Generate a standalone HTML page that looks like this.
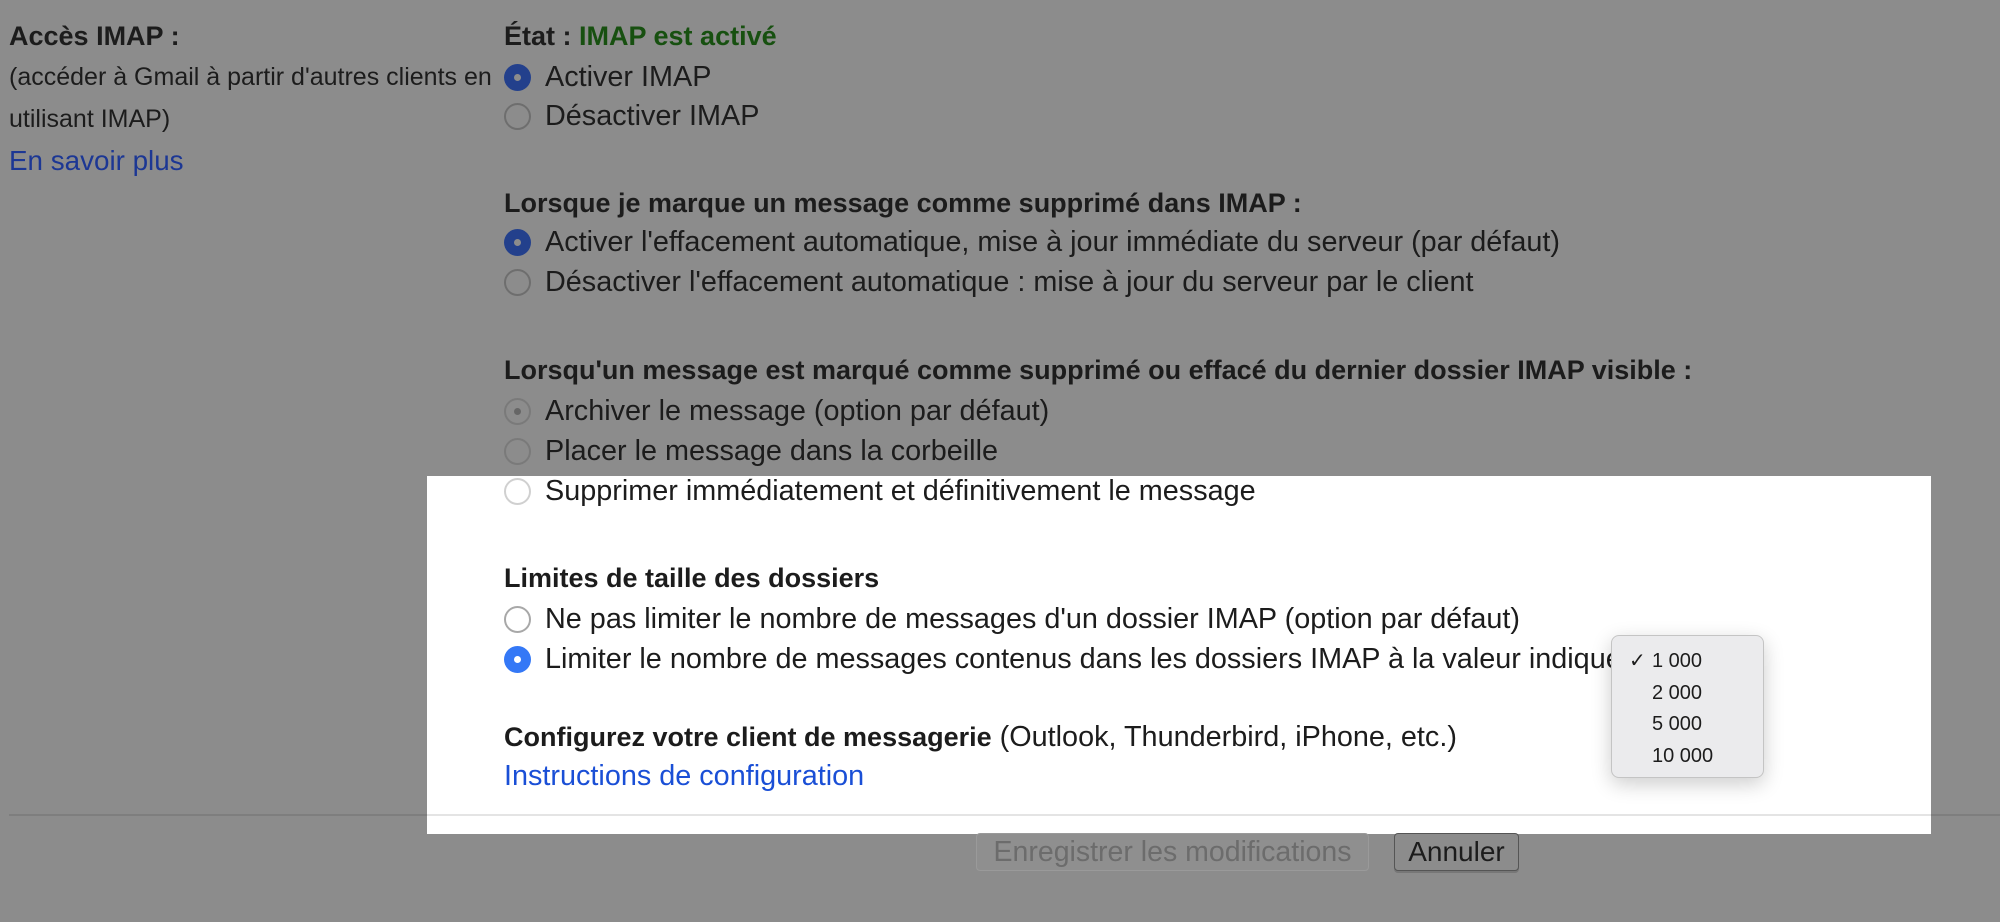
<!DOCTYPE html>
<html><head><meta charset="utf-8"><style>
html,body{margin:0;padding:0}
body{width:2000px;height:922px;background:#8c8c8c;position:relative;overflow:hidden;font-family:"Liberation Sans",Arial,sans-serif;font-size:28.8px;color:#1c1c1c}
.t{position:absolute;line-height:40px;white-space:nowrap}
b{font-weight:bold;font-size:27px}
.r{position:absolute;width:23px;height:23px;border-radius:50%;border:2px solid #6e6e6e;box-sizing:content-box}
.panel{position:absolute;left:427px;top:476px;width:1504px;height:358px;background:#fff}
</style></head><body>
<div class="t" style="left:9px;top:16px"><b>Accès IMAP :</b></div>
<div class="t" style="left:9px;top:57px;font-size:25px">(accéder à Gmail à partir d'autres clients en</div>
<div class="t" style="left:9px;top:99px;font-size:25px">utilisant IMAP)</div>
<div class="t" style="left:9px;top:141px;color:#1c3794;font-size:27.8px">En savoir plus</div>

<div class="t" style="left:504px;top:16px"><b>État : <span style="color:#175010">IMAP est activé</span></b></div>
<div class="r" style="left:504px;top:64px;border:none;width:27px;height:27px;background:#23408c"><div style="position:absolute;left:10px;top:10px;width:7px;height:7px;border-radius:50%;background:#8c8c8c"></div></div>
<div class="t" style="left:545px;top:57px">Activer IMAP</div>
<div class="r" style="left:504px;top:103px"></div>
<div class="t" style="left:545px;top:96px">Désactiver IMAP</div>

<div class="t" style="left:504px;top:183px"><b>Lorsque je marque un message comme supprimé dans IMAP :</b></div>
<div class="r" style="left:504px;top:229px;border:none;width:27px;height:27px;background:#23408c"><div style="position:absolute;left:10px;top:10px;width:7px;height:7px;border-radius:50%;background:#8c8c8c"></div></div>
<div class="t" style="left:545px;top:222px">Activer l'effacement automatique, mise à jour immédiate du serveur (par défaut)</div>
<div class="r" style="left:504px;top:269px"></div>
<div class="t" style="left:545px;top:262px">Désactiver l'effacement automatique : mise à jour du serveur par le client</div>

<div class="t" style="left:504px;top:350px"><b>Lorsqu'un message est marqué comme supprimé ou effacé du dernier dossier IMAP visible :</b></div>
<div class="r" style="left:504px;top:398px;border-color:#7a7a7a"><div style="position:absolute;left:8px;top:8px;width:7px;height:7px;border-radius:50%;background:#666"></div></div>
<div class="t" style="left:545px;top:391px">Archiver le message (option par défaut)</div>
<div class="r" style="left:504px;top:438px;border-color:#7a7a7a"></div>
<div class="t" style="left:545px;top:431px">Placer le message dans la corbeille</div>

<div style="position:absolute;left:9px;top:814px;width:1991px;height:2px;background:#7e7e7e"></div>

<div class="panel"></div>
<div style="position:absolute;left:427px;top:814px;width:1504px;height:2px;background:#e4e4e4"></div>
<div class="r" style="left:504px;top:478px;border-color:#d0d0d0"></div>
<div class="t" style="left:545px;top:471px">Supprimer immédiatement et définitivement le message</div>
<div class="t" style="left:504px;top:558px"><b>Limites de taille des dossiers</b></div>
<div class="r" style="left:504px;top:606px;border-color:#a8a8a8"></div>
<div class="t" style="left:545px;top:599px">Ne pas limiter le nombre de messages d'un dossier IMAP (option par défaut)</div>
<div class="r" style="left:504px;top:646px;border:none;width:27px;height:27px;background:#3478f6"><div style="position:absolute;left:10px;top:10px;width:7px;height:7px;border-radius:50%;background:#fff"></div></div>
<div class="t" style="left:545px;top:639px">Limiter le nombre de messages contenus dans les dossiers IMAP à la valeur indiquée</div>
<div class="t" style="left:504px;top:717px"><b>Configurez votre client de messagerie</b> (Outlook, Thunderbird, iPhone, etc.)</div>
<div class="t" style="left:504px;top:756px;color:#1a4fd6">Instructions de configuration</div>

<div style="position:absolute;left:1611px;top:635px;width:153px;height:143px;background:#ebebed;border:1px solid #c4c4c4;border-radius:8px;box-shadow:0 6px 20px rgba(0,0,0,.2);box-sizing:border-box;font-size:20px">
<div class="t" style="left:17px;top:10px;line-height:30px">✓</div>
<div class="t" style="left:40px;top:10px;line-height:30px">1 000</div>
<div class="t" style="left:40px;top:42px;line-height:30px">2 000</div>
<div class="t" style="left:40px;top:73px;line-height:30px">5 000</div>
<div class="t" style="left:40px;top:105px;line-height:30px">10 000</div>
</div>

<div style="position:absolute;left:976px;top:833px;width:393px;height:38px;border:1px solid #9a9a9a;border-radius:4px;box-sizing:border-box;background:#8f8f8f;color:#6c6c6c;text-align:center;line-height:36px;font-size:28.5px">Enregistrer les modifications</div>
<div style="position:absolute;left:1394px;top:833px;width:125px;height:38px;border:1px solid #555;border-radius:4px;box-sizing:border-box;background:#8c8c8c;color:#1c1c1c;text-align:center;line-height:36px;font-size:28px;box-shadow:0 2px 0 #777">Annuler</div>
</body></html>
